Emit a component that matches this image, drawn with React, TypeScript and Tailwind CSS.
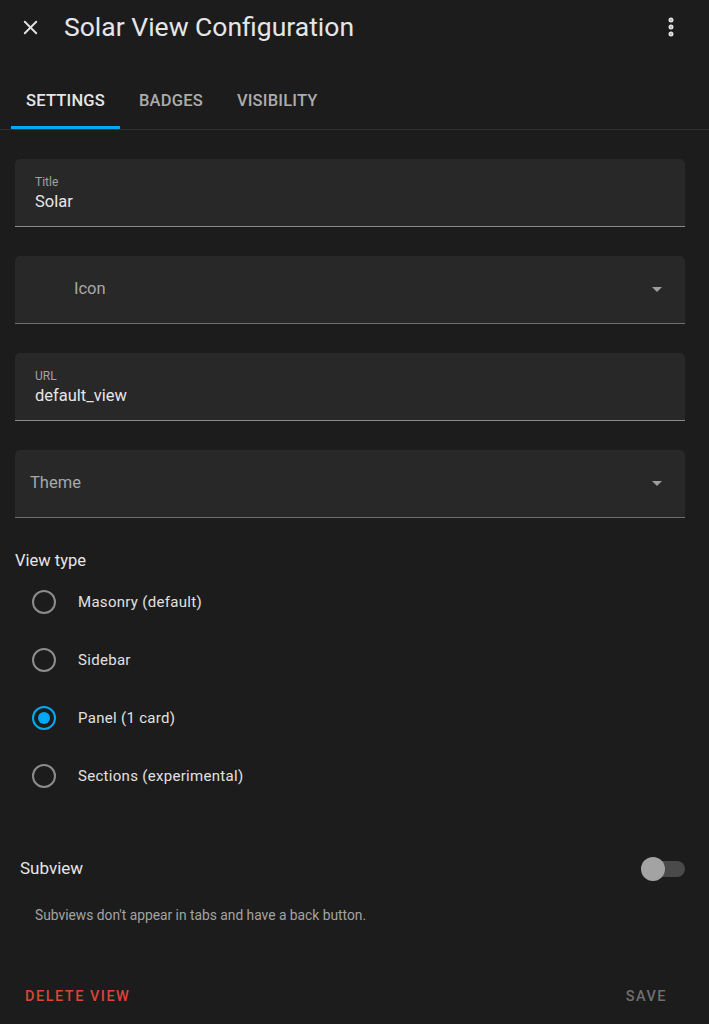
import { X, EllipsisVertical } from 'lucide-react'

const viewTypes = [
  { label: 'Masonry (default)', checked: false },
  { label: 'Sidebar', checked: false },
  { label: 'Panel (1 card)', checked: true },
  { label: 'Sections (experimental)', checked: false },
]

function Caret() {
  return (
    <svg width="10" height="5" viewBox="0 0 10 5" className="shrink-0">
      <path d="M0 0 L10 0 L5 5 Z" fill="#9e9e9e" />
    </svg>
  )
}

function TextField({ label, value }: { label: string; value: string }) {
  return (
    <div className="w-[670px] h-[68px] bg-[#282828] rounded-t-[5px] border-b border-[#8a8a8a] flex flex-col pl-[20px] pt-[16px]">
      <span className="text-[12px] leading-[14px] text-[#a3a3a3]">{label}</span>
      <span className="text-[16.5px] leading-[24px] mt-[1px] text-[#e6e6e6]">{value}</span>
    </div>
  )
}

function SelectField({ label, indent }: { label: string; indent: string }) {
  return (
    <div className="w-[670px] h-[68px] bg-[#282828] rounded-t-[5px] border-b border-[#6e6e6e] flex items-center pr-[23px]">
      <span className={`${indent} flex-1 text-[16.5px] text-[#a8a8a8]`}>{label}</span>
      <Caret />
    </div>
  )
}

export default function App() {
  return (
    <div className="w-[709px] h-[1024px] bg-[#1c1c1c] text-[#e1e1e1] overflow-hidden" style={{ fontFamily: 'Roboto, "Noto Sans", sans-serif' }}>
      <div className="h-[54px] flex items-center pl-[19px] pr-[26px]">
        <X size={23} strokeWidth={2} className="text-[#e1e1e1]" />
        <span className="ml-[22px] flex-1 text-[26.5px] text-[#e6e6e6]">Solar View Configuration</span>
        <EllipsisVertical size={24} strokeWidth={3} className="text-[#e1e1e1]" />
      </div>

      <div className="mt-[18px] h-[58px] border-b border-[#2f2f2f] flex pl-[11px] text-[16.5px] font-medium uppercase tracking-[0.2px]">
        <div className="w-[109px] flex items-center justify-center border-b-[3px] border-[#03a9f4] pt-[4px] text-[#e6e6e6]">Settings</div>
        <div className="pl-[19px] pr-[17px] flex items-center pt-[2px] text-[#acacac]">Badges</div>
        <div className="pl-[17px] flex items-center pt-[2px] text-[#acacac]">Visibility</div>
      </div>

      <div className="pl-[15px] pt-[29px] flex flex-col gap-[29px]">
        <TextField label="Title" value="Solar" />
        <SelectField label="Icon" indent="pl-[59px]" />
        <TextField label="URL" value="default_view" />
        <SelectField label="Theme" indent="pl-[15px]" />
      </div>

      <div className="pl-[15px] mt-[31px]">
        <div className="h-[24px] flex items-center text-[16.5px] text-[#e6e6e6]">View type</div>
        <div className="flex flex-col">
          {viewTypes.map((v) => (
            <div key={v.label} className="h-[58px] flex items-center pl-[17px]">
              <div
                className={`w-[24px] h-[24px] rounded-full border-2 flex items-center justify-center ${v.checked ? 'border-[#03a9f4]' : 'border-[#8c8c8c]'}`}
              >
                {v.checked && <div className="w-[12px] h-[12px] rounded-full bg-[#03a9f4]" />}
              </div>
              <span className="ml-[22px] text-[15px] tracking-[0.3px] text-[#e1e1e1]">{v.label}</span>
            </div>
          ))}
        </div>
      </div>

      <div className="mt-[40px] h-[48px] flex items-center pl-[20px] pr-[24px]">
        <span className="flex-1 text-[17px] text-[#e6e6e6]">Subview</span>
        <div className="relative w-[44px] h-[24px] flex items-center">
          <div className="ml-[12px] w-[32px] h-[16px] rounded-full bg-[#4a4a4a]" />
          <div className="absolute left-0 top-0 w-[24px] h-[24px] rounded-full bg-[#a3a3a3]" />
        </div>
      </div>

      <div className="pl-[35px] mt-[12px] text-[13.8px] text-[#a3a3a3]">Subviews don't appear in tabs and have a back button.</div>

      <div className="mt-[60px] flex items-center justify-between pl-[25px] pr-[42px] text-[14.5px] font-medium uppercase tracking-[1.5px]">
        <span className="text-[#db4437]">Delete view</span>
        <span className="text-[#6f6f6f]">Save</span>
      </div>
    </div>
  )
}
